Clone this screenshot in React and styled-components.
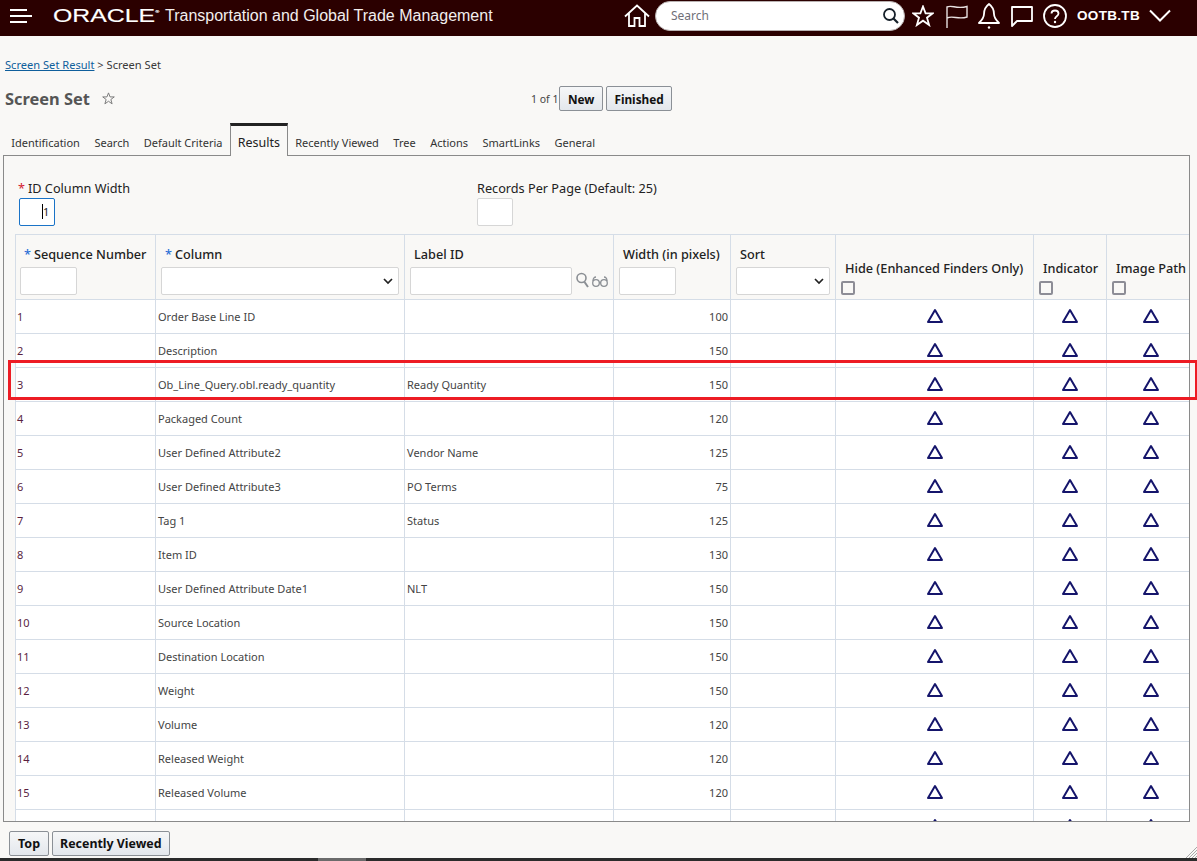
import styled, { createGlobalStyle } from 'styled-components'

const GlobalStyle = createGlobalStyle`
    html, body {
        margin: 0;
        padding: 0;
        height: 100%;
        overflow: hidden;
        background-color: #f9f8f6;
        font-family: "Noto Sans", "Open Sans", sans-serif;
        color: #333;
    }
`

const Page = styled.div`
    position: relative;
    display: flex;
    flex-direction: column;
    height: 861px;
    overflow: hidden;
`

const TopBar = styled.header`
    display: flex;
    align-items: center;
    flex: 0 0 36px;
    box-sizing: border-box;
    padding: 0 0 5px 10px;
    background-color: #2b0000;
    color: #fff;
`

const Burger = styled.div`
    display: flex;
    flex-direction: column;
    align-items: flex-start;
    gap: 4px;
    width: 22px;
    span {
        display: block;
        height: 2px;
        width: 17px;
        background-color: #fff;
    }
    span:nth-child(2) { width: 22px; }
`

const Logo = styled.div`
    position: relative;
    width: 103px;
    margin-left: 21px;
    font-family: "Liberation Sans", Arial, sans-serif;
    font-size: 18px;
    line-height: 20px;
    -webkit-text-stroke: 0.15px #fff;
    transform: scaleX(1.38);
    transform-origin: left center;
    white-space: nowrap;
    sup {
        font-size: 4px;
        vertical-align: 9px;
        line-height: 0;
    }
`

const ProductName = styled.div`
    margin-left: 9px;
    font-family: "Liberation Sans", Arial, sans-serif;
    font-size: 16px;
    color: #f2eeee;
    white-space: nowrap;
`

const BarTools = styled.div`
    display: flex;
    align-items: center;
    margin-left: auto;
    padding-right: 26px;
`

const SearchPill = styled.div`
    display: flex;
    align-items: center;
    justify-content: space-between;
    box-sizing: border-box;
    width: 250px;
    height: 30px;
    margin: 0 7px 0 5px;
    padding: 0 4px 0 15px;
    border: 1px solid #b9b2b2;
    border-radius: 15px;
    background-color: #fff;
    color: #6f6f78;
    font-size: 12px;
    svg { display: block; }
`

const BarIcon = styled.svg`
    display: block;
    flex: none;
    margin-left: ${(props) => props.$gap || 0}px;
    fill: none;
    stroke: ${(props) => props.$color || '#fff'};
    stroke-width: 1.8;
`

const UserName = styled.div`
    margin-left: 10px;
    font-family: "Liberation Sans", Arial, sans-serif;
    font-size: 13px;
    font-weight: 700;
    letter-spacing: 0.3px;
    transform: scaleX(1.04);
    transform-origin: left center;
    width: 62px;
    white-space: nowrap;
`

const Breadcrumb = styled.nav`
    padding: 21px 0 0 5px;
    height: 16px;
    font-size: 11.1px;
    line-height: 16px;
    color: #3a3a3a;
    a {
        color: #0f5f9c;
        text-decoration: underline;
    }
`

const TitleRow = styled.div`
    display: grid;
    grid-template-columns: 526px auto;
    align-items: center;
    height: 25px;
    margin-top: 13px;
    padding-left: 5px;
`

const Title = styled.h1`
    display: flex;
    align-items: center;
    gap: 12px;
    margin: 0;
    font-size: 16.4px;
    font-weight: 700;
    color: #555;
`

const RecordActions = styled.div`
    display: flex;
    align-items: center;
    gap: 3px;
    font-size: 10.5px;
    color: #444;
    button:first-of-type { margin-left: -2px; }
`

const Button = styled.button`
    height: 25px;
    padding: 0 ${(props) => props.$pad || 7.5}px;
    border: 1px solid #8b9096;
    border-radius: 2px;
    background: linear-gradient(#f6f7f8, #e3e7ec);
    font-family: "Noto Sans", sans-serif;
    font-size: ${(props) => props.$size || 11.8}px;
    font-weight: 700;
    color: #111;
`

const Tabs = styled.div`
    display: flex;
    align-items: flex-end;
    height: 33px;
    margin: 12px 0 -1px 4px;
    position: relative;
    z-index: 1;
`

const Tab = styled.div`
    box-sizing: border-box;
    height: ${(props) => (props.$active ? 33 : 28)}px;
    padding: ${(props) => (props.$active ? '8px 7px 0' : '6px 7.25px 0')};
    font-size: ${(props) => (props.$active ? 12.5 : 11)}px;
    line-height: 18px;
    color: ${(props) => (props.$active ? '#222' : '#333')};
    white-space: nowrap;
    ${(props) => props.$active && `
        border-top: 3px solid #222;
        border-left: 1px solid #8a8a8a;
        border-right: 1px solid #8a8a8a;
        background-color: #f9f8f6;
    `}
`

const Panel = styled.section`
    box-sizing: border-box;
    flex: 0 0 667px;
    width: 1187px;
    margin-left: 3px;
    padding-left: 11px;
    border: 1px solid #8a8a8a;
    overflow: hidden;
`

const FormRow = styled.div`
    display: flex;
    height: 78px;
    padding-top: 23px;
    box-sizing: border-box;
`

const FormField = styled.div`
    width: ${(props) => props.$width}px;
    font-size: 12.7px;
    line-height: 18px;
    color: #222;
    white-space: nowrap;
`

const FieldLabel = styled.div`
    padding-left: ${(props) => props.$indent || 0}px;
`

const Required = styled.span`
    color: ${(props) => props.$color || '#d3202f'};
    margin-right: 3px;
`

const Box = styled.div`
    box-sizing: border-box;
    width: ${(props) => props.$width || 36}px;
    height: 28px;
    margin-top: ${(props) => (props.$flush ? 0 : 1)}px;
    margin-left: ${(props) => props.$left || 0}px;
    border: 1px solid ${(props) => (props.$focused ? '#1a73c7' : '#d6d6d6')};
    border-radius: 2px;
    background-color: #fff;
    font-size: 11px;
    line-height: 26px;
    padding-left: ${(props) => (props.$focused ? 22 : 0)}px;
    span { border-left: 1px solid #000; }
`

const Table = styled.table`
    table-layout: fixed;
    width: 1180px;
    border-collapse: collapse;
`

const HeadCell = styled.th`
    height: 64px;
    padding: 0 0 0 ${(props) => props.$pad || 4}px;
    border: 1px solid #d5dde7;
    vertical-align: top;
    text-align: left;
    font-size: 12.7px;
    font-weight: 500;
    color: #222;
    white-space: nowrap;
`

const HeadLabel = styled.div`
    padding: 10px 0 0 4px;
    height: 22px;
    line-height: 18px;
`

const FlagLabel = styled.div`
    padding: 24px 0 0 4px;
    line-height: 18px;
`

const FilterRow = styled.div`
    display: flex;
    align-items: center;
    gap: 4px;
`

const Select = styled.select`
    display: block;
    appearance: none;
    box-sizing: border-box;
    width: ${(props) => props.$width}px;
    height: 28px;
    border: 1px solid #d6d6d6;
    border-radius: 2px;
    background: #fff url("data:image/svg+xml,%3Csvg xmlns='http://www.w3.org/2000/svg' width='10' height='7'%3E%3Cpath d='M1 1l4 4 4-4' fill='none' stroke='%23222' stroke-width='1.7'/%3E%3C/svg%3E") no-repeat right 5px center;
`

const Check = styled.div`
    box-sizing: border-box;
    width: 14px;
    height: 14px;
    margin-top: 4px;
    border: 2px solid #8d8d96;
    border-radius: 2px;
    background-color: #f9f8f6;
`

const Row = styled.tr`
    background-color: #fff;
`

const Cell = styled.td`
    height: 33px;
    padding: ${(props) => (props.$numeric ? '0 2px 0 0' : `0 0 0 ${props.$pad || 2}px`)};
    border: 1px solid #d5dde7;
    font-size: 11px;
    line-height: 14px;
    text-align: ${(props) => (props.$numeric ? 'right' : 'left')};
    color: ${(props) => props.$color || '#444'};
    white-space: nowrap;
`

const TriangleCell = styled.td`
    height: 33px;
    padding: 0;
    border: 1px solid #d5dde7;
    text-align: center;
    svg {
        display: inline-block;
        vertical-align: middle;
        margin-top: -5px;
    }
`

const Footer = styled.footer`
    display: flex;
    align-items: flex-start;
    gap: 3px;
    flex: 1;
    box-sizing: border-box;
    padding: 9px 0 0 9px;
`

const ScrollStrip = styled.div`
    flex: 0 0 3px;
    padding-left: 318px;
    background-color: #2b2b2b;
    div {
        width: 48px;
        height: 3px;
        background-color: #6b6b6b;
    }
`

const Grip = styled.svg`
    position: absolute;
    right: 0;
    bottom: 3px;
    stroke: #a9a9a9;
    stroke-width: 1;
`

const Highlight = styled.div`
    position: absolute;
    left: 8px;
    top: 360px;
    width: 1189px;
    height: 40px;
    box-sizing: border-box;
    border: 3px solid #ed1c24;
    border-right-width: 2px;
    pointer-events: none;
`

const tabs = ['Identification', 'Search', 'Default Criteria', 'Results', 'Recently Viewed', 'Tree', 'Actions', 'SmartLinks', 'General']

const rows = [
    ['1', 'Order Base Line ID', '', '100'],
    ['2', 'Description', '', '150'],
    ['3', 'Ob_Line_Query.obl.ready_quantity', 'Ready Quantity', '150'],
    ['4', 'Packaged Count', '', '120'],
    ['5', 'User Defined Attribute2', 'Vendor Name', '125'],
    ['6', 'User Defined Attribute3', 'PO Terms', '75'],
    ['7', 'Tag 1', 'Status', '125'],
    ['8', 'Item ID', '', '130'],
    ['9', 'User Defined Attribute Date1', 'NLT', '150'],
    ['10', 'Source Location', '', '150'],
    ['11', 'Destination Location', '', '150'],
    ['12', 'Weight', '', '150'],
    ['13', 'Volume', '', '120'],
    ['14', 'Released Weight', '', '120'],
    ['15', 'Released Volume', '', '120'],
    ['', '', '', ''],
]

const columnWidths = [140, 249, 209, 117, 105, 198, 73, 89]

const Triangle = () => (
    <svg width="18" height="16" viewBox="0 0 18 16" fill="none" stroke="#15156b" strokeWidth="2" strokeLinejoin="round" strokeLinecap="round">
        <path d="M9 2 L16 14 H2 Z" />
    </svg>
)

const App = () => (
    <Page>
        <GlobalStyle />
        <TopBar>
            <Burger><span /><span /><span /></Burger>
            <Logo>ORACLE<sup>®</sup></Logo>
            <ProductName>Transportation and Global Trade Management</ProductName>
            <BarTools>
                <BarIcon width="26" height="23" viewBox="0 0 26 23">
                    <path d="M1 12.5 L13 1.5 L25 12.5 M5 9.5 V22 H10.5 V14 H15.5 V22 H21 V9.5" />
                </BarIcon>
                <SearchPill>
                    Search
                    <BarIcon width="18" height="18" viewBox="0 0 18 18" $color="#16202a">
                        <circle cx="7.5" cy="7.5" r="5.5" />
                        <path d="M11.5 11.5 L16 16" strokeWidth="2.2" />
                    </BarIcon>
                </SearchPill>
                <BarIcon width="22" height="22" viewBox="0 0 22 22">
                    <path d="M11 1.5 L13.6 8.3 H20.8 L15 12.7 L17.1 20 L11 15.7 L4.9 20 L7 12.7 L1.2 8.3 H8.4 Z" />
                </BarIcon>
                <BarIcon width="22" height="24" viewBox="0 0 22 24" $gap={12} $color="#e8e0e0">
                    <path d="M1 24 V3 C6 0.5 10 5.5 21 2.5 V13 C12 16 7 11 1 14" strokeWidth="1.4" />
                </BarIcon>
                <BarIcon width="22" height="26" viewBox="0 0 22 26" $gap={10}>
                    <path d="M11 1 C7 4 6 7 6 11 C6 15 4 17 1 20 H21 C18 17 16 15 16 11 C16 7 15 4 11 1 Z" strokeLinejoin="round" />
                    <circle cx="11" cy="24.5" r="1.2" fill="#fff" stroke="none" />
                </BarIcon>
                <BarIcon width="22" height="22" viewBox="0 0 22 22" $gap={11}>
                    <path d="M1 2 H21 V16 H6 L1 21 Z" strokeLinejoin="round" />
                </BarIcon>
                <BarIcon width="24" height="24" viewBox="0 0 24 24" $gap={10}>
                    <circle cx="12" cy="12" r="11" />
                    <path d="M8.5 9.5 C8.5 5.5 15.5 5.5 15.5 9.5 C15.5 12.5 12 12 12 15" />
                    <circle cx="12" cy="18" r="1.2" fill="#fff" stroke="none" />
                </BarIcon>
                <UserName>OOTB.TB</UserName>
                <BarIcon width="22" height="13" viewBox="0 0 22 13" $gap={10}>
                    <path d="M1 1.5 L11 11.5 L21 1.5" strokeWidth="2" />
                </BarIcon>
            </BarTools>
        </TopBar>

        <Breadcrumb><a href="#top">Screen Set Result</a> &gt; Screen Set</Breadcrumb>

        <TitleRow>
            <Title>
                Screen Set
                <svg width="13" height="13" viewBox="0 0 22 22" fill="none" stroke="#777" strokeWidth="1.6">
                    <path d="M11 1.5 L13.6 8.3 H20.8 L15 12.7 L17.1 20 L11 15.7 L4.9 20 L7 12.7 L1.2 8.3 H8.4 Z" />
                </svg>
            </Title>
            <RecordActions>
                1 of 1
                <Button>New</Button>
                <Button>Finished</Button>
            </RecordActions>
        </TitleRow>

        <Tabs>
            {tabs.map((tab) => <Tab key={tab} $active={tab === 'Results'}>{tab}</Tab>)}
        </Tabs>

        <Panel>
            <FormRow>
                <FormField $width={462}>
                    <FieldLabel $indent={3}><Required>*</Required>ID Column Width</FieldLabel>
                    <Box $focused $left={4}><span>1</span></Box>
                </FormField>
                <FormField $width={240}>
                    <FieldLabel>Records Per Page (Default: 25)</FieldLabel>
                    <Box />
                </FormField>
            </FormRow>
            <Table>
                <colgroup>
                    {columnWidths.map((width, index) => <col key={index} style={{ width }} />)}
                </colgroup>
                <thead>
                    <tr>
                        <HeadCell>
                            <HeadLabel><Required $color="#2b6fd6">*</Required>Sequence Number</HeadLabel>
                            <Box $width={57} $flush />
                        </HeadCell>
                        <HeadCell $pad={5}>
                            <HeadLabel><Required $color="#2b6fd6">*</Required>Column</HeadLabel>
                            <Select $width={238} />
                        </HeadCell>
                        <HeadCell $pad={5}>
                            <HeadLabel>Label ID</HeadLabel>
                            <FilterRow>
                                <Box $width={162} $flush />
                                <svg width="32" height="20" viewBox="0 0 32 20" fill="none" stroke="#8b8f94" strokeWidth="1.3">
                                    <circle cx="5.5" cy="7" r="4.5" strokeWidth="1.6" />
                                    <path d="M8.5 11 L12 16" strokeWidth="2" />
                                    <circle cx="20" cy="12" r="3.3" />
                                    <circle cx="28" cy="12" r="3.3" />
                                    <path d="M23.3 11.5 H24.7 M17 10 C17 7 18.5 6 20 6 M31 10 C31 7 29.5 6 28 6" />
                                </svg>
                            </FilterRow>
                        </HeadCell>
                        <HeadCell $pad={5}>
                            <HeadLabel>Width (in pixels)</HeadLabel>
                            <Box $width={57} $flush />
                        </HeadCell>
                        <HeadCell $pad={5}>
                            <HeadLabel>Sort</HeadLabel>
                            <Select $width={94} />
                        </HeadCell>
                        <HeadCell $pad={5}>
                            <FlagLabel>Hide (Enhanced Finders Only)</FlagLabel>
                            <Check />
                        </HeadCell>
                        <HeadCell $pad={5}>
                            <FlagLabel>Indicator</FlagLabel>
                            <Check />
                        </HeadCell>
                        <HeadCell $pad={5}>
                            <FlagLabel>Image Path</FlagLabel>
                            <Check />
                        </HeadCell>
                    </tr>
                </thead>
                <tbody>
                    {rows.map((row, index) => (
                        <Row key={index}>
                            <Cell $pad={1} $color="#5a1f3f">{row[0]}</Cell>
                            <Cell>{row[1]}</Cell>
                            <Cell>{row[2]}</Cell>
                            <Cell $numeric>{row[3]}</Cell>
                            <Cell />
                            <TriangleCell><Triangle /></TriangleCell>
                            <TriangleCell><Triangle /></TriangleCell>
                            <TriangleCell><Triangle /></TriangleCell>
                        </Row>
                    ))}
                </tbody>
            </Table>
        </Panel>

        <Footer>
            <Button $pad={8} $size={12.5}>Top</Button>
            <Button $pad={7} $size={12.4}>Recently Viewed</Button>
        </Footer>
        <ScrollStrip><div /></ScrollStrip>
        <Grip width="11" height="11" viewBox="0 0 11 11">
            <path d="M0 11 L11 0 M3 11 L11 3 M6 11 L11 6 M9 11 L11 9" />
        </Grip>
        <Highlight />
    </Page>
)

export default App
